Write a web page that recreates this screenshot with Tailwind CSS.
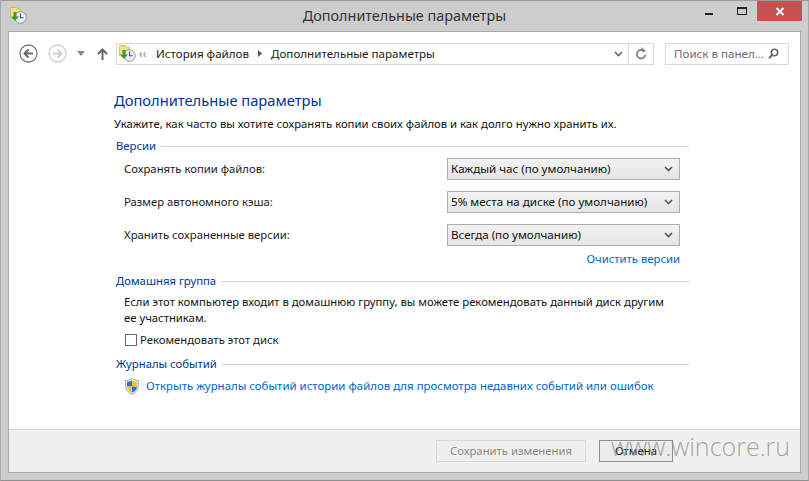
<!DOCTYPE html>
<html lang="ru">
<head>
    <meta charset="UTF-8">
    <title>Дополнительные параметры</title>
    <script src="https://cdn.jsdelivr.net/npm/@tailwindcss/browser@4"></script>
</head>
<body class="w-[809px] h-[481px] overflow-hidden bg-[#cdcdcd] font-['Noto_Sans','Open_Sans',sans-serif] text-[11.3px] text-[#1a1a1a]">
<div class="relative flex flex-col h-full border-t border-t-[#9a9a9a] border-x border-x-[#a8a8a8] border-b border-b-[#8f8f8f]">

    <!-- title bar -->
    <div class="relative h-[30px] shrink-0 flex items-center justify-center text-[14.4px] text-[#333]">
        <svg class="absolute left-[9px] top-[6px]" width="17" height="17" viewBox="0 0 17 17">
            <path d="M.5.5h6l1 1.500h3v9h-10z" fill="#f6e27a" stroke="#cdb650" stroke-width=".8"/>
            <circle cx="10.500" cy="10.500" r="5.800" fill="#e9edf1" stroke="#8c98a6"/>
            <path d="M10.500 6.500v4.300h3" fill="none" stroke="#46586a" stroke-width="1.100"/>
            <path d="M6.500 5v4.500H9l-4 4.500-4-4.500h2.500V5z" fill="#3c9a2e"/>
        </svg>
        <span class="-mt-[1px]">Дополнительные параметры</span>
        <div class="absolute right-[6px] top-0 flex items-start">
            <div class="w-[36px] h-[20px] flex items-center justify-center"><div class="w-[8px] h-[2px] mt-[5px] bg-[#222]"></div></div>
            <div class="w-[30px] h-[20px] flex items-center justify-center"><div class="w-[10px] h-[8px] border border-[#222] border-t-2"></div></div>
            <div class="w-[45px] h-[20px] bg-[#c75050] flex items-center justify-center">
                <svg width="10" height="9" viewBox="0 0 10 9"><path d="M1.500 1l7 7M8.500 1l-7 7" stroke="#fff" stroke-width="2"/></svg>
            </div>
        </div>
    </div>

    <!-- client area -->
    <div class="mx-[7px] mb-[7px] flex-1 flex flex-col bg-white border border-[#a9a9a9] min-h-0">

        <!-- nav bar -->
        <div class="h-[38px] shrink-0 flex items-center pt-[5px] pl-[10px]">
            <svg width="19" height="19" viewBox="0 0 19 19">
                <circle cx="9.500" cy="9.500" r="8.500" fill="#fff" stroke="#7a7a7a" stroke-width="1.300"/>
                <path d="M14 9.500H6M9.500 5.500l-4 4 4 4" fill="none" stroke="#666" stroke-width="2"/>
            </svg>
            <svg class="ml-[10px]" width="19" height="19" viewBox="0 0 19 19">
                <circle cx="9.500" cy="9.500" r="8.500" fill="#fff" stroke="#cfcfcf" stroke-width="1.300"/>
                <path d="M5 9.500h8M9.500 5.500l4 4-4 4" fill="none" stroke="#cfcfcf" stroke-width="2"/>
            </svg>
            <svg class="ml-[10px]" width="8" height="5" viewBox="0 0 8 5"><path d="M0 0h8L4 5z" fill="#8a8a8a"/></svg>
            <svg class="ml-[12px]" width="11" height="12" viewBox="0 0 11 12"><path d="M5.500 12V1.500M1 6l4.500-4.500L10 6" fill="none" stroke="#666" stroke-width="2"/></svg>

            <div class="ml-[8px] w-[538px] h-[22px] flex items-center border border-[#d9d9d9]">
                <svg class="ml-[2px]" width="17" height="17" viewBox="0 0 17 17">
                    <path d="M.5.5h6l1 1.500h3v9h-10z" fill="#f6e27a" stroke="#cdb650" stroke-width=".8"/>
                    <circle cx="10.500" cy="10.500" r="5.800" fill="#e9edf1" stroke="#8c98a6"/>
                    <path d="M10.500 6.500v4.300h3" fill="none" stroke="#46586a" stroke-width="1.100"/>
                    <path d="M6.500 5v4.500H9l-4 4.500-4-4.500h2.500V5z" fill="#3c9a2e"/>
                </svg>
                <span class="ml-[3px] w-[9px] text-[#8a8a8a] text-[12px] leading-none">‹‹</span>
                <span class="ml-[8px] text-[11.6px]">История файлов</span>
                <svg class="ml-[9px]" width="4" height="7" viewBox="0 0 4 7"><path d="M0 0l4 3.500L0 7z" fill="#555"/></svg>
                <span class="ml-[9px] text-[11.6px]">Дополнительные параметры</span>
                <svg class="ml-auto mr-[5px]" width="9" height="6" viewBox="0 0 9 6"><path d="M1 1l3.500 3.500L8 1" fill="none" stroke="#666" stroke-width="1.600"/></svg>
                <div class="w-[25px] h-full border-l border-[#d9d9d9] flex items-center justify-center">
                    <svg width="12" height="13" viewBox="0 0 12 13"><path d="M9.500 4.500A4.300 4.300 0 1 0 10.300 8" fill="none" stroke="#7d7d7d" stroke-width="1.700"/><path d="M6.500 0v4.500H11z" fill="#7d7d7d"/></svg>
                </div>
            </div>

            <div class="ml-[11px] w-[124px] h-[22px] flex items-center justify-between pl-[8px] pr-[9px] border border-[#d9d9d9] text-[#6d6d6d] text-[11.6px]">
                <span>Поиск в панел...</span>
                <svg width="11" height="11" viewBox="0 0 11 11"><circle cx="6.500" cy="4.500" r="3.200" fill="none" stroke="#666" stroke-width="1.600"/><path d="M4.200 7L1 10.300" stroke="#666" stroke-width="2"/></svg>
            </div>
        </div>

        <!-- content -->
        <div class="flex-1 pl-[105px] pr-[111px] pt-[20px] min-h-0">
            <h1 class="text-[14.7px] leading-[20px] text-[#003399]">Дополнительные параметры</h1>
            <p class="mt-[6px] leading-[16px] text-[#111]">Укажите, как часто вы хотите сохранять копии своих файлов и как долго нужно хранить их.</p>

            <div class="mt-[6px] flex items-center h-[17px] pl-[2px] text-[#003399]">
                <span>Версии</span><div class="ml-[5px] flex-1 h-px bg-[#d5d5d5]"></div>
            </div>

            <div class="mt-[3px] flex flex-col gap-[11px] pl-[10px] pr-[9px]">
                <div class="flex items-center justify-between h-[22px]">
                    <span>Сохранять копии файлов:</span>
                    <div class="w-[233px] h-[22px] flex items-center justify-between pl-[3px] pr-[6px] border border-[#adadad] bg-gradient-to-b from-[#f2f2f2] to-[#e5e5e5] text-[#111] text-[11.6px]">
                        <span>Каждый час (по умолчанию)</span>
                        <svg width="9" height="6" viewBox="0 0 9 6"><path d="M1 1l3.500 3.500L8 1" fill="none" stroke="#555" stroke-width="1.600"/></svg>
                    </div>
                </div>
                <div class="flex items-center justify-between h-[22px]">
                    <span>Размер автономного кэша:</span>
                    <div class="w-[233px] h-[22px] flex items-center justify-between pl-[3px] pr-[6px] border border-[#adadad] bg-gradient-to-b from-[#f2f2f2] to-[#e5e5e5] text-[#111] text-[11.6px]">
                        <span>5% места на диске (по умолчанию)</span>
                        <svg width="9" height="6" viewBox="0 0 9 6"><path d="M1 1l3.500 3.500L8 1" fill="none" stroke="#555" stroke-width="1.600"/></svg>
                    </div>
                </div>
                <div class="flex items-center justify-between h-[22px]">
                    <span>Хранить сохраненные версии:</span>
                    <div class="w-[233px] h-[22px] flex items-center justify-between pl-[3px] pr-[6px] border border-[#adadad] bg-gradient-to-b from-[#f2f2f2] to-[#e5e5e5] text-[#111] text-[11.6px]">
                        <span>Всегда (по умолчанию)</span>
                        <svg width="9" height="6" viewBox="0 0 9 6"><path d="M1 1l3.500 3.500L8 1" fill="none" stroke="#555" stroke-width="1.600"/></svg>
                    </div>
                </div>
            </div>

            <div class="mt-[5px] pr-[9px] text-right leading-[16px] text-[#0066cc]">Очистить версии</div>

            <div class="mt-[6px] flex items-center h-[17px] pl-[2px] text-[#003399]">
                <span>Домашняя группа</span><div class="ml-[5px] flex-1 h-px bg-[#d5d5d5]"></div>
            </div>
            <p class="mt-[4px] pl-[10px] leading-[16px] text-[#111]">Если этот компьютер входит в домашнюю группу, вы можете рекомендовать данный диск другим<br>ее участникам.</p>
            <div class="mt-[6px] pl-[11px] flex items-center h-[16px]">
                <div class="w-[12px] h-[12px] border border-[#666] bg-white"></div>
                <span class="ml-[3px]">Рекомендовать этот диск</span>
            </div>

            <div class="mt-[8px] flex items-center h-[17px] pl-[2px] text-[#003399]">
                <span>Журналы событий</span><div class="ml-[5px] flex-1 h-px bg-[#d5d5d5]"></div>
            </div>
            <div class="mt-[3px] pl-[10px] flex items-center h-[20px]">
                <svg width="16" height="17" viewBox="0 0 16 17">
                    <path d="M8 .5c2 1.500 4 2 6.500 2 0 6 .5 10.500-6.500 14C1 13 1.500 8.500 1.500 2.500 4 2.500 6 2 8 .5z" fill="#eef0f2" stroke="#8a93a0" stroke-width=".8"/>
                    <path d="M8 2.500v6H3C3 6 3 5 3 3.800c2 0 3.500-.5 5-1.300zM8 8.500h5c-.300 2.500-1.500 4.600-5 6.200z" fill="#2f6fc4"/>
                    <path d="M8 2.500c1.500.8 3 1.300 5 1.300 0 1.200.1 3.200 0 4.700H8zM3 8.500h5v6.200c-3.500-1.600-4.700-3.700-5-6.200z" fill="#f2c230"/>
                </svg>
                <span class="ml-[6px] text-[#0066cc] text-[11.43px]">Открыть журналы событий истории файлов для просмотра недавних событий или ошибок</span>
            </div>
        </div>

        <!-- footer -->
        <div class="h-[43px] shrink-0 flex items-start pt-[10px] pl-[427px] bg-[#f0f0f0] border-t border-[#d4d4d4]">
            <div class="w-[150px] h-[22px] flex items-center justify-center border border-[#d9d9d9] bg-[#efefef] text-[#8a8a8a]">Сохранить изменения</div>
            <div class="ml-[13px] w-[74px] h-[22px] flex items-center justify-center border border-[#8f8f8f] bg-[#ececec] text-[#111]">Отмена</div>
        </div>
    </div>

    <!-- watermark over the window -->
    <div class="absolute left-[610px] top-[427px] text-[25px] leading-[36px] font-['Open_Sans',sans-serif] font-light text-[#8a8a8a]/75">www.wincore.ru</div>
</div>
</body>
</html>
